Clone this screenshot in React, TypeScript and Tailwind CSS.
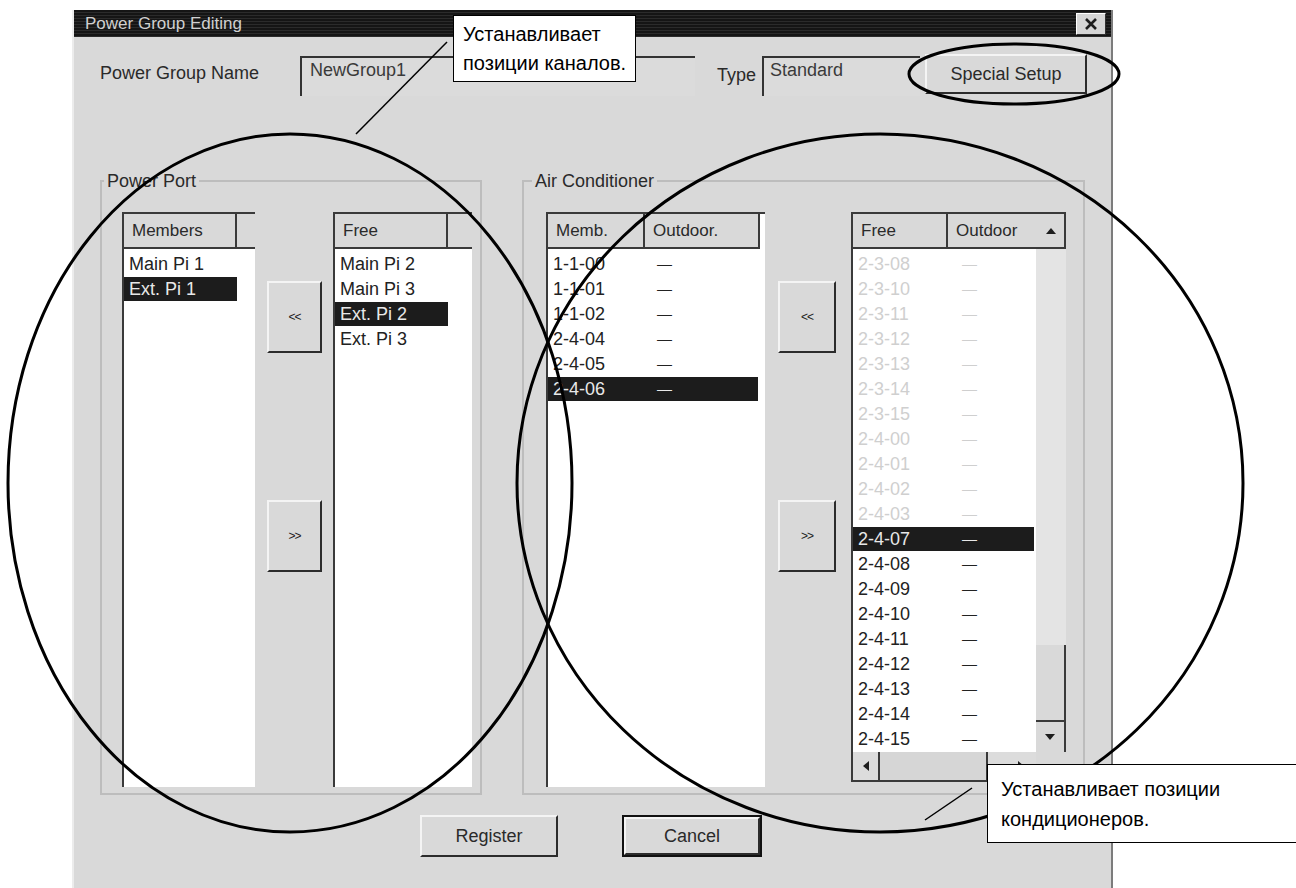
import React from 'react';

type Item = { id: string; out?: string; sel?: boolean; faded?: boolean };

const ppMembers: Item[] = [{ id: 'Main Pi 1' }, { id: 'Ext. Pi 1', sel: true }];
const ppFree: Item[] = [{ id: 'Main Pi 2' }, { id: 'Main Pi 3' }, { id: 'Ext. Pi 2', sel: true }, { id: 'Ext. Pi 3' }];
const acMembers: Item[] = ['1-1-00', '1-1-01', '1-1-02', '2-4-04', '2-4-05', '2-4-06'].map((id, i) => ({
  id,
  out: '—',
  sel: i === 5,
}));
const acFree: Item[] = [
  ...['2-3-08', '2-3-10', '2-3-11', '2-3-12', '2-3-13', '2-3-14', '2-3-15', '2-4-00', '2-4-01', '2-4-02', '2-4-03'].map(
    (id) => ({ id, out: '—', faded: true })
  ),
  ...['2-4-07', '2-4-08', '2-4-09', '2-4-10', '2-4-11', '2-4-12', '2-4-13', '2-4-14', '2-4-15'].map((id, i) => ({
    id,
    out: '—',
    sel: i === 0,
  })),
];

function Raised({ className, children }: { className?: string; children?: React.ReactNode }) {
  return (
    <div
      className={`flex shrink-0 items-center justify-center border-2 border-t-[#f4f4f4] border-l-[#f4f4f4] border-r-[#2c2c2c] border-b-[#2c2c2c] bg-[#d9d9d9] ${className ?? ''}`}
    >
      {children}
    </div>
  );
}

function Tri({ dir }: { dir: 'up' | 'down' | 'left' | 'right' }) {
  const pts = {
    up: '0,7 5,1 10,7',
    down: '0,1 5,7 10,1',
    left: '7,0 1,5 7,10',
    right: '1,0 7,5 1,10',
  }[dir];
  const vert = dir === 'up' || dir === 'down';
  return (
    <svg width={vert ? 10 : 8} height={vert ? 8 : 10} viewBox={vert ? '0 0 10 8' : '0 0 8 10'}>
      <polygon points={pts} fill="#1e1e1e" />
    </svg>
  );
}

function HeaderCell({ w, children, last }: { w: string; children?: React.ReactNode; last?: boolean }) {
  return (
    <div className={`flex h-full items-center pl-[8px] text-[17px] text-[#2a2a2a] ${w} ${last ? '' : 'border-r-2 border-[#3a3a3a]'}`}>
      {children}
    </div>
  );
}

function Row({ item, col1, col2, selW }: { item: Item; col1: string; col2?: boolean; selW: string }) {
  const tone = item.sel ? 'bg-[#1c1c1c] text-[#e8e8e8]' : item.faded ? 'text-[#cfcfcf]' : 'text-[#222]';
  return (
    <div className="flex h-[25px] items-center">
      <div className={`flex h-[24px] items-center ${selW} ${tone}`}>
        <span className={`${col1} pl-[5px] text-[18px] leading-none`}>{item.id}</span>
        {col2 && <span className="pl-[12px] text-[15px] leading-none">{item.out}</span>}
      </div>
    </div>
  );
}

function MoveButtons() {
  return (
    <div className="flex h-[575px] flex-col">
      <Raised className="mt-[69px] h-[72px] w-full text-[12px] tracking-[-1px]">&lt;&lt;</Raised>
      <Raised className="mt-[147px] h-[72px] w-full text-[12px] tracking-[-1px]">&gt;&gt;</Raised>
    </div>
  );
}

export default function App() {
  return (
    <div className="relative h-[888px] w-[1296px] overflow-hidden bg-white [font-family:'Liberation_Sans',Arial,sans-serif] text-[#1e1e1e]">
      <div className="ml-[72px] pt-[10px]">
        <div className="flex h-[900px] w-[1041px] flex-col border-l-2 border-r-2 border-l-[#ececec] border-r-[#7c7c7c] bg-[#d9d9d9]">
          {/* title bar */}
          <div className="flex h-[27px] shrink-0 items-center justify-between bg-[repeating-linear-gradient(180deg,#151515_0px,#151515_2px,#2b2b2b_2px,#2b2b2b_3px)] pl-[11px] pr-[5px]">
            <span className="text-[17px] text-[#d0d0d0]">Power Group Editing</span>
            <div className="flex h-[22px] w-[30px] items-center justify-center border border-t-white border-l-white border-r-[#303030] border-b-[#303030] bg-[#d6d6d6]">
              <svg width="14" height="12" viewBox="0 0 14 12">
                <path d="M2 1 L12 11 M12 1 L2 11" stroke="#1e1e1e" strokeWidth="2.6" />
              </svg>
            </div>
          </div>

          {/* name / type row */}
          <div className="flex items-start pl-[26px] pt-[19px]">
            <div className="w-[200px] pt-[4px] text-[18px] text-[#2a2a2a]">Power Group Name</div>
            <div className="h-[40px] w-[395px] border-l-2 border-t-2 border-[#333] bg-[#dbdbdb] pl-[8px] text-[18px] leading-[24px] text-[#3a3a3a]">
              NewGroup1
            </div>
            <div className="ml-[22px] w-[38px] pt-[6px] text-[18px] text-[#2a2a2a]">Type</div>
            <div className="ml-[7px] h-[40px] w-[158px] border-l-2 border-t-2 border-[#333] bg-[#dbdbdb] pl-[6px] text-[18px] leading-[24px] text-[#3a3a3a]">
              Standard
            </div>
            <Raised className="ml-[5px] -mt-[2px] h-[40px] w-[162px] text-[18px] text-[#2a2a2a]">Special Setup</Raised>
          </div>

          {/* groups */}
          <div className="mt-[74px] flex items-start gap-[40px] pl-[26px]">
            {/* Power Port */}
            <fieldset className="w-[382px] min-w-0 border-2 border-[#bdbdbd] pl-[20px] pr-[8px] pt-[20px] pb-[6px]">
              <legend className="-ml-[18px] px-[3px] text-[18px] leading-[22px] text-[#2a2a2a]">Power Port</legend>
              <div className="flex">
                <div className="flex h-[575px] w-[133px] flex-col border-l-2 border-t-2 border-[#3a3a3a] bg-white">
                  <div className="flex h-[35px] shrink-0 border-b-2 border-[#3a3a3a] bg-[#d9d9d9]">
                    <HeaderCell w="w-[113px]">Members</HeaderCell>
                    <HeaderCell w="flex-1" last />
                  </div>
                  <div className="pt-[2px]">
                    {ppMembers.map((it) => (
                      <Row key={it.id} item={it} col1="w-[113px]" selW="w-[113px]" />
                    ))}
                  </div>
                </div>
                <div className="ml-[12px] w-[55px]">
                  <MoveButtons />
                </div>
                <div className="ml-[11px] flex h-[575px] w-[139px] flex-col border-l-2 border-t-2 border-[#3a3a3a] bg-white">
                  <div className="flex h-[35px] shrink-0 border-b-2 border-[#3a3a3a] bg-[#d9d9d9]">
                    <HeaderCell w="w-[113px]">Free</HeaderCell>
                    <HeaderCell w="flex-1" last />
                  </div>
                  <div className="pt-[2px]">
                    {ppFree.map((it) => (
                      <Row key={it.id} item={it} col1="w-[113px]" selW="w-[113px]" />
                    ))}
                  </div>
                </div>
              </div>
            </fieldset>

            {/* Air Conditioner */}
            <fieldset className="w-[563px] min-w-0 border-2 border-[#bdbdbd] pl-[22px] pr-[15px] pt-[20px] pb-[6px]">
              <legend className="-ml-[14px] px-[3px] text-[18px] leading-[22px] text-[#2a2a2a]">Air Conditioner</legend>
              <div className="flex">
                <div className="flex h-[575px] w-[219px] flex-col border-l-2 border-t-2 border-[#3a3a3a] bg-white">
                  <div className="flex h-[35px] w-[212px] shrink-0 border-b-2 border-[#3a3a3a] bg-[#d9d9d9]">
                    <HeaderCell w="w-[97px]">Memb.</HeaderCell>
                    <HeaderCell w="w-[115px]">Outdoor.</HeaderCell>
                  </div>
                  <div className="pt-[2px]">
                    {acMembers.map((it) => (
                      <Row key={it.id} item={it} col1="w-[97px]" col2 selW="w-[210px]" />
                    ))}
                  </div>
                </div>
                <div className="ml-[13px] w-[58px]">
                  <MoveButtons />
                </div>
                <div className="ml-[15px] flex h-[570px] w-[215px] flex-col border-l-2 border-t-2 border-[#3a3a3a]">
                  <div className="flex h-[35px] shrink-0 border-b-2 border-r-2 border-[#3a3a3a] bg-[#d9d9d9]">
                    <HeaderCell w="w-[95px]">Free</HeaderCell>
                    <div className="flex flex-1 items-center justify-between pl-[8px] pr-[8px] text-[17px] text-[#2a2a2a]">
                      Outdoor
                      <Tri dir="up" />
                    </div>
                  </div>
                  <div className="flex flex-1">
                    <div className="flex w-[183px] flex-col">
                      <div className="flex-1 bg-white pt-[2px]">
                        {acFree.map((it) => (
                          <Row key={it.id} item={it} col1="w-[97px]" col2 selW="w-[181px]" />
                        ))}
                      </div>
                      {/* horizontal scrollbar */}
                      <div className="flex h-[30px] shrink-0 border-b-2 border-[#3a3a3a] bg-[#dcdcdc]">
                        <div className="flex w-[27px] items-center justify-center border-r-2 border-[#3a3a3a]">
                          <Tri dir="left" />
                        </div>
                        <div className="w-[108px] border-r-2 border-[#3a3a3a] bg-[#d6d6d6]" />
                        <div className="flex-1" />
                        <div className="flex w-[30px] items-center justify-center">
                          <Tri dir="right" />
                        </div>
                      </div>
                    </div>
                    {/* vertical scrollbar */}
                    <div className="flex w-[30px] flex-col">
                      <div className="flex-1 bg-[#e4e4e4]" />
                      <div className="h-[77px] border-r-2 border-b-2 border-[#3a3a3a] bg-[#d9d9d9]" />
                      <div className="flex h-[30px] items-center justify-center border-r-2 border-[#3a3a3a] bg-[#d9d9d9]">
                        <Tri dir="down" />
                      </div>
                      <div className="h-[30px] bg-[#d9d9d9]" />
                    </div>
                  </div>
                </div>
              </div>
            </fieldset>
          </div>

          {/* bottom buttons */}
          <div className="mt-[20px] flex pl-[346px]">
            <Raised className="h-[42px] w-[138px] text-[18px] text-[#2a2a2a]">Register</Raised>
            <div className="ml-[64px] h-[42px] w-[140px] border-2 border-[#111]">
              <Raised className="h-full w-full text-[18px] text-[#2a2a2a]">Cancel</Raised>
            </div>
          </div>
        </div>
      </div>

      {/* annotation overlay */}
      <svg className="pointer-events-none absolute left-0 top-0" width="1296" height="888" viewBox="0 0 1296 888">
        <ellipse cx="290" cy="483" rx="282" ry="349" fill="none" stroke="#000" strokeWidth="3" />
        <ellipse cx="880" cy="483" rx="363" ry="349" fill="none" stroke="#000" strokeWidth="3" />
        <ellipse cx="1014" cy="74" rx="105" ry="30" fill="none" stroke="#000" strokeWidth="3" />
        <line x1="447" y1="42" x2="356" y2="134" stroke="#000" strokeWidth="1.5" />
        <line x1="972" y1="788" x2="925" y2="820" stroke="#000" strokeWidth="1.5" />
      </svg>

      <div className="absolute left-[453px] top-[15px] h-[67px] w-[183px] border-[1.5px] border-black bg-white pl-[9px] pt-[4px] text-[20px] leading-[29px] text-black">
        <div>Устанавливает</div>
        <div>позиции каналов.</div>
      </div>
      <div className="absolute left-[987px] top-[764px] h-[79px] w-[330px] border-[1.5px] border-black bg-white pl-[13px] pt-[9px] text-[20px] leading-[30px] text-black">
        <div>Устанавливает позиции</div>
        <div>кондиционеров.</div>
      </div>
    </div>
  );
}
